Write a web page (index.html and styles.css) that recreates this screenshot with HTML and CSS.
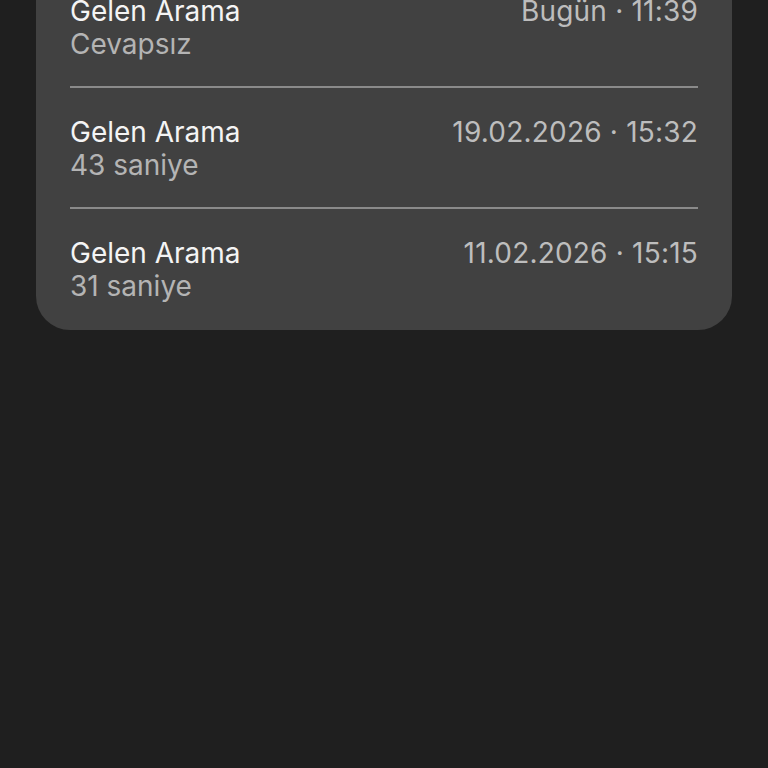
FILE: index.html
```html
<!DOCTYPE html>
<html lang="tr">
<head>
<meta charset="utf-8">
<link rel="stylesheet" href="styles.css">
</head>
<body>
<div class="card">
  <div class="row">
    <div class="line"><span class="title">Gelen Arama</span><span class="time">Bugün · 11:39</span></div>
    <div class="sub">Cevapsız</div>
  </div>
  <div class="row">
    <div class="line"><span class="title">Gelen Arama</span><span class="time">19.02.2026 · 15:32</span></div>
    <div class="sub">43 saniye</div>
  </div>
  <div class="row">
    <div class="line"><span class="title">Gelen Arama</span><span class="time">11.02.2026 · 15:15</span></div>
    <div class="sub">31 saniye</div>
  </div>
</div>
</body>
</html>
```
FILE: styles.css
```css
html, body {
  margin: 0;
  padding: 0;
  background: #1f1f1f;
  height: 100%;
  overflow: hidden;
}
body {
  font-family: Inter, "Liberation Sans", sans-serif;
}
.card {
  margin: -33px 36px 0;
  background: #414141;
  border-radius: 0 0 34px 34px;
  padding: 0 34px;
}
.row {
  padding: 27px 0 26px;
  border-bottom: 2px solid #8a8a8a;
}
.row:last-child {
  border-bottom: none;
  padding-bottom: 28px;
}
.line {
  display: flex;
  justify-content: space-between;
  align-items: baseline;
  height: 34px;
  line-height: 34px;
}
.title {
  font-size: 28px;
  color: #f4f4f4;
}
.time {
  font-size: 28px;
  letter-spacing: 0.2px;
  color: #bdbdbd;
}
.sub {
  font-size: 28px;
  line-height: 32px;
  color: #b4b4b4;
}
```
